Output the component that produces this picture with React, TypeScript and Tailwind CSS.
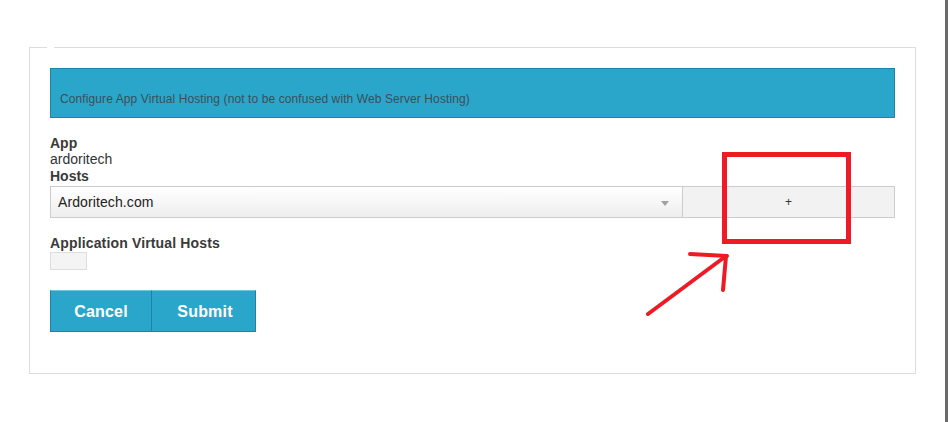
import { useState } from 'react';

const FONT = { fontFamily: '"Liberation Sans", Arial, sans-serif' };

function HostSelect() {
  const [host, setHost] = useState('Ardoritech.com');
  return (
    <div className="flex h-[32px] w-[845px]">
      <div className="relative flex h-full w-[633px] items-center border border-[#cccccc] bg-gradient-to-b from-white to-[#eeeeee] pl-[7px]">
        <span className="text-[14px] tracking-[0.1px] text-[#222222]">{host}</span>
        <span className="absolute right-[13px] top-[14px] h-0 w-0 border-x-[4px] border-t-[5px] border-x-transparent border-t-[#a0a0a0]" />
      </div>
      <button
        onClick={() => setHost(host)}
        className="flex h-full w-[212px] items-center justify-center border border-l-0 border-[#cccccc] bg-[#f2f2f2] text-[12px] text-[#333333]"
      >
        +
      </button>
    </div>
  );
}

export default function App() {
  return (
    <div className="relative h-[422px] w-[948px] overflow-hidden bg-white" style={FONT}>
      <div className="ml-[29px] pt-[47px]">
        <div className="relative h-[327px] w-[887px] border border-[#dddddd] px-[20px] pt-[20px]">
          <span className="absolute left-[17px] top-[-1px] h-[1px] w-[7px] bg-white" />

          <div className="h-[50px] w-[845px] border border-[#1b86a6] bg-[#2ba6cb] px-[9px] pt-[23px]">
            <p className="text-[12px] leading-[14px] tracking-[0.1px] text-[#3c4f57]">
              Configure App Virtual Hosting (not to be confused with Web Server Hosting)
            </p>
          </div>

          <div className="mt-[17px] text-[14px] leading-[16px] text-[#3a3a3a]">
            <div className="font-bold">App</div>
            <div className="text-[#333333]">ardoritech</div>
            <div className="mt-[1px] font-bold">Hosts</div>
          </div>
          <div className="mt-[2px]">
            <HostSelect />
          </div>

          <div className="mt-[17px] text-[14px] font-bold leading-[16px] tracking-[0.15px] text-[#3a3a3a]">
            Application Virtual Hosts
          </div>
          <div className="mt-[1px] h-[18px] w-[37px] border border-[#dddddd] bg-[#f4f4f4]" />

          <div className="mt-[20px] flex">
            <button className="h-[42px] w-[102px] border border-[#1c84a4] border-t-[#6fc6e0] bg-[#2ba6cb] pt-[2px] text-[16px] font-bold tracking-[0.2px] text-white">
              Cancel
            </button>
            <button className="h-[42px] w-[104px] border border-l-0 border-[#1c84a4] border-t-[#6fc6e0] bg-[#2ba6cb] pt-[2px] pl-[3px] text-[16px] font-bold tracking-[0.2px] text-white">
              Submit
            </button>
          </div>
        </div>
      </div>

      <div className="absolute right-0 top-0 h-full w-[3px] bg-[#6a6a6a]" />

      <svg className="pointer-events-none absolute left-0 top-0" width="948" height="422">
        <rect x="724.5" y="154.5" width="124" height="87" fill="none" stroke="#ed1c24" strokeWidth="5" />
        <g stroke="#ed1c24" strokeWidth="4" strokeLinecap="round" fill="none">
          <path d="M648 314 L726 256" />
          <path d="M690 254 L727 256" />
          <path d="M726 256 L723 290" />
        </g>
      </svg>
    </div>
  );
}
